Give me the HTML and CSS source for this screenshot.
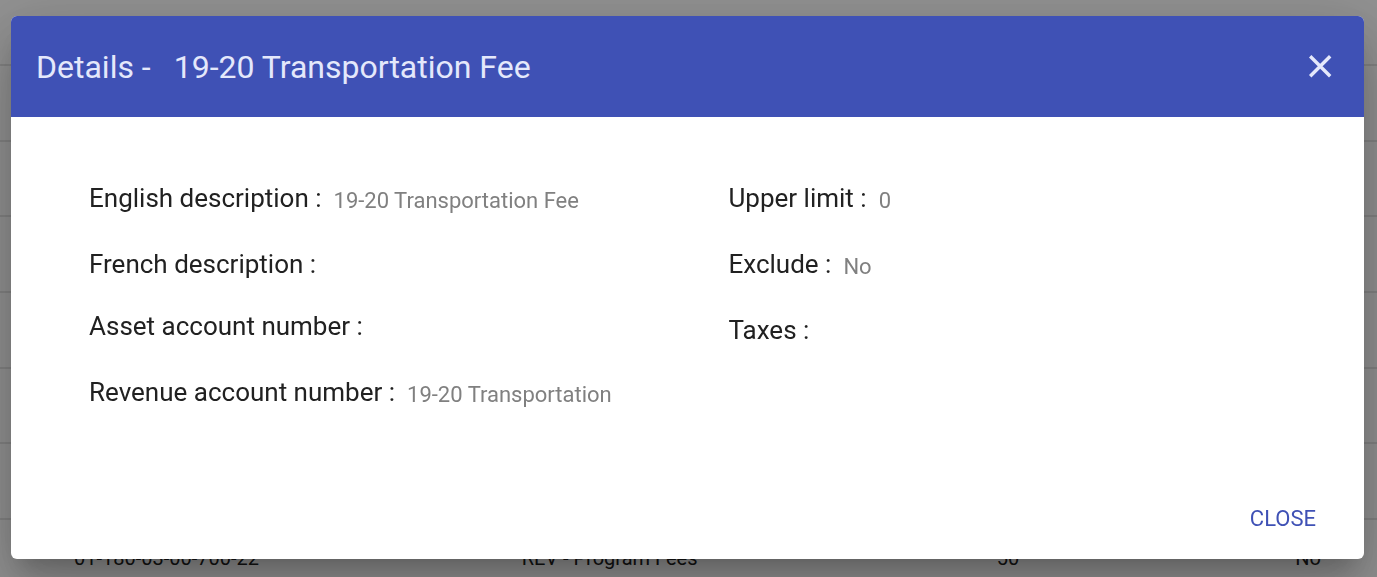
FILE: index.html
```html
<!DOCTYPE html>
<html lang="en">
<head>
<meta charset="utf-8">
<meta name="viewport" content="width=device-width, initial-scale=1">
<title>Details</title>
<link rel="stylesheet" href="styles.css">
</head>
<body>
<table class="fees" aria-hidden="true">
  <tbody>
    <tr class="fees-first"><td></td><td></td><td></td><td></td></tr>
    <tr><td></td><td></td><td></td><td></td></tr>
    <tr class="fees-short"><td></td><td></td><td></td><td></td></tr>
    <tr><td></td><td></td><td></td><td></td></tr>
    <tr><td></td><td></td><td></td><td></td></tr>
    <tr class="fees-short"><td></td><td></td><td></td><td></td></tr>
    <tr><td></td><td></td><td></td><td></td></tr>
    <tr><td class="fees-code">01-180-03-00-700-22</td><td class="fees-name">REV - Program Fees</td><td class="fees-limit">50</td><td>No</td></tr>
  </tbody>
</table>
<div class="backdrop">
  <section class="dialog" role="dialog" aria-modal="true" aria-labelledby="dialog-title">
    <header class="dialog-header">
      <h1 class="dialog-title" id="dialog-title"><span>Details -</span><span>19-20 Transportation Fee</span></h1>
      <button class="dismiss" type="button" aria-label="Close dialog">
        <svg class="dismiss-icon" viewBox="0 0 24 24" aria-hidden="true"><path d="M2.2 2.2 22.2 22.2M22.2 2.2 2.2 22.2"/></svg>
      </button>
    </header>
    <div class="dialog-content">
      <dl class="details">
        <div class="detail"><dt>English description :</dt><dd>19-20 Transportation Fee</dd></div>
        <div class="detail detail-compact"><dt>French description :</dt><dd></dd></div>
        <div class="detail"><dt>Asset account number :</dt><dd></dd></div>
        <div class="detail"><dt>Revenue account number :</dt><dd>19-20 Transportation</dd></div>
      </dl>
      <dl class="details">
        <div class="detail"><dt>Upper limit :</dt><dd>0</dd></div>
        <div class="detail"><dt>Exclude :</dt><dd>No</dd></div>
        <div class="detail"><dt>Taxes :</dt><dd></dd></div>
      </dl>
    </div>
    <footer class="dialog-actions"><button class="close" type="button">CLOSE</button></footer>
  </section>
</div>
</body>
</html>
```
FILE: styles.css
```css
* { box-sizing: border-box; }
html { height: 100%; }
body {
  margin: 0;
  height: 100%;
  overflow: hidden;
  background: #fff;
  color: #212121;
  font-family: Roboto, "Liberation Sans", sans-serif;
}
.fees {
  width: 100%;
  border-collapse: separate;
  border-spacing: 0;
  table-layout: fixed;
  font-size: 20px;
  line-height: 24px;
}
.fees tr { height: 76px; }
.fees .fees-first { height: 66px; }
.fees .fees-short { height: 75px; }
.fees td {
  padding: 2px 0 0;
  border-bottom: 2px solid #e4e4e4;
  text-align: right;
}
.fees td:last-child { padding-right: 56px; }
.fees td:nth-child(1) { width: 32%; }
.fees td:nth-child(2) { width: 30%; }
.fees .fees-code { padding-left: 74px; text-align: left; }
.fees .fees-name { padding-left: 81px; text-align: left; }
.fees .fees-limit { padding-left: 143px; text-align: left; }
.backdrop {
  position: fixed;
  inset: 0;
  display: flex;
  padding: 16px 13px 18px 11px;
  background: rgba(0, 0, 0, 0.43);
}
.dialog {
  flex: 1;
  display: flex;
  flex-direction: column;
  overflow: hidden;
  border-radius: 6px;
  background: #fff;
  box-shadow:
    0 16px 22px -10px rgba(0, 0, 0, 0.2),
    0 36px 57px 4px rgba(0, 0, 0, 0.14),
    0 13px 69px 12px rgba(0, 0, 0, 0.12);
}
.dialog-header {
  display: flex;
  align-items: flex-start;
  justify-content: space-between;
  padding: 30px 24px 29px 25px;
  background: #3f51b5;
  color: #e4e8fb;
}
.dialog-title {
  display: flex;
  gap: 23px;
  margin: 0;
  font-size: 32px;
  font-weight: 400;
  line-height: 42px;
}
.dismiss {
  display: flex;
  padding: 8px;
  border: 0;
  background: none;
  color: inherit;
  cursor: pointer;
}
.dismiss-icon {
  width: 24px;
  height: 24px;
  fill: none;
  stroke: currentColor;
  stroke-width: 3.4;
  stroke-linecap: butt;
}
.dialog-content {
  flex: 1;
  display: grid;
  grid-template-columns: 1fr 1fr;
  column-gap: 4px;
  padding: 64px 0 0 78px;
}
.details { margin: 0; }
.detail {
  display: flex;
  align-items: flex-start;
  gap: 12px;
  height: 66px;
}
.detail-compact { height: 62px; }
.detail dt {
  font-size: 26px;
  line-height: 34px;
}
.detail dd {
  margin: 0;
  color: #808080;
  font-size: 22px;
  line-height: 40px;
}
.dialog-actions {
  display: flex;
  justify-content: flex-end;
  padding: 0 24px 12px;
}
.close {
  padding: 0 24px;
  border: 0;
  background: none;
  color: #3f51b5;
  font-family: inherit;
  font-size: 22px;
  line-height: 56px;
  cursor: pointer;
}
```
